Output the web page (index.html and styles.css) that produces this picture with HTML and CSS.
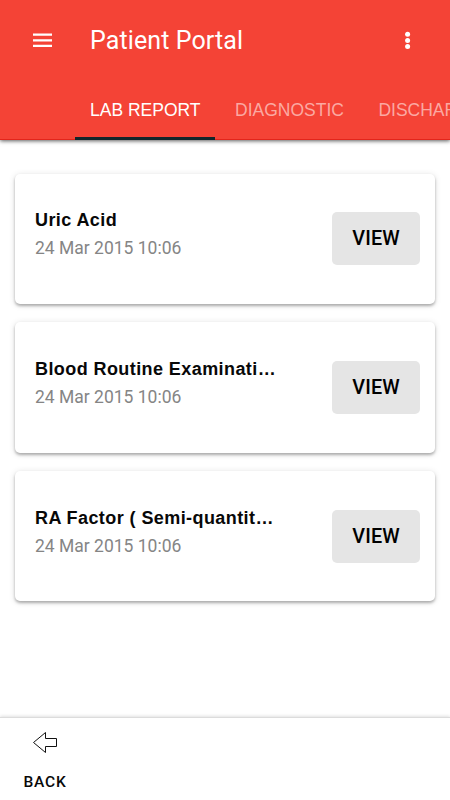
FILE: index.html
```html
<!DOCTYPE html>
<html lang="en">
<head>
<meta charset="utf-8">
<title>Patient Portal</title>
<link rel="stylesheet" href="styles.css">
</head>
<body>
<header class="header">
  <div class="toolbar">
    <svg class="menu" viewBox="0 0 19 14"><path d="M0 1.6h19M0 7.4h19M0 12.8h19" stroke="#fff" stroke-width="2.2"/></svg>
    <h1 class="title">Patient Portal</h1>
    <svg class="more" viewBox="0 0 6 18" fill="#fff"><circle cx="2.6" cy="3.3" r="2.5"/><circle cx="2.6" cy="9.5" r="2.5"/><circle cx="2.6" cy="15.5" r="2.5"/></svg>
  </div>
  <nav class="tabs">
    <a class="tab active">LAB REPORT</a>
    <a class="tab">DIAGNOSTIC</a>
    <a class="tab">DISCHARGE</a>
  </nav>
</header>
<main class="list">
  <article class="card">
    <div class="info"><h2 class="name">Uric Acid</h2><p class="date">24 Mar 2015 10:06</p></div>
    <button class="view">VIEW</button>
  </article>
  <article class="card">
    <div class="info"><h2 class="name">Blood Routine Examination</h2><p class="date">24 Mar 2015 10:06</p></div>
    <button class="view">VIEW</button>
  </article>
  <article class="card">
    <div class="info"><h2 class="name">RA Factor ( Semi-quantitative )</h2><p class="date">24 Mar 2015 10:06</p></div>
    <button class="view">VIEW</button>
  </article>
</main>
<footer class="footer">
  <div class="back">
    <svg class="arrow" viewBox="0 0 26 22"><path d="M1.5 10.5 13.5.5V6.5H24.5V14.5H13.5V20.5Z" fill="none" stroke="#111" stroke-width="1"/></svg>
    <span class="back-label">BACK</span>
  </div>
</footer>
</body>
</html>
```

FILE: styles.css
```css
* { box-sizing: border-box; }
body {
  margin: 0;
  height: 800px;
  display: flex;
  flex-direction: column;
  overflow: hidden;
  background: #fff;
  font-family: Roboto, sans-serif;
}
h1, h2, p { margin: 0; }
.header {
  height: 140px;
  flex: none;
  background: #f44336;
  border-bottom: 1px solid #e2251b;
  box-shadow: 0 1px 4px rgba(0, 0, 0, .65);
}
.toolbar {
  height: 80px;
  display: flex;
  align-items: center;
  padding: 0 39px 0 33px;
  color: #fff;
}
.menu { width: 19px; height: 14px; }
.title {
  flex: 1;
  margin-left: 38px;
  font-size: 25px;
  font-weight: 400;
  letter-spacing: .1px;
}
.more { width: 6px; height: 18px; }
.tabs {
  display: flex;
  gap: 5px;
  padding-left: 75px;
  overflow: hidden;
}
.tab {
  flex: none;
  height: 60px;
  padding: 0 14.5px 0 15px;
  line-height: 60px;
  font-family: "Liberation Sans", sans-serif;
  font-size: 17.5px;
  white-space: nowrap;
  color: #fba9a2;
}
.active {
  width: 140px;
  color: #fff;
  border-bottom: 3px solid #12262b;
}
.list {
  flex: 1;
  padding: 33.5px 15px 0;
  display: flex;
  flex-direction: column;
  gap: 18.5px;
}
.card {
  height: 130.25px;
  flex: none;
  display: flex;
  justify-content: space-between;
  align-items: center;
  padding: 0 15px 0 20px;
  border-radius: 5px;
  background: #fff;
  box-shadow: 0 2px 3px rgba(0, 0, 0, .28), 0 1px 7px rgba(0, 0, 0, .12);
}
.info { width: 244px; }
.name {
  height: 28px;
  line-height: 28px;
  font-family: "Liberation Sans", sans-serif;
  font-size: 18px;
  letter-spacing: .42px;
  color: #080808;
  white-space: nowrap;
  overflow: hidden;
  text-overflow: ellipsis;
}
.date {
  height: 28px;
  line-height: 28px;
  margin-bottom: 9px;
  font-size: 17.5px;
  color: #858585;
}
.view {
  width: 88px;
  height: 53px;
  padding: 0;
  border: 0;
  border-radius: 5px;
  background: #e5e5e5;
  color: #000;
  font: 500 19.8px Roboto, sans-serif;
  letter-spacing: .1px;
}
.footer {
  height: 83.5px;
  flex: none;
  border-top: 1px solid #dcdcdc;
  box-shadow: 0 -1px 3px rgba(0, 0, 0, .12);
}
.back {
  width: 90px;
  display: flex;
  flex-direction: column;
  align-items: center;
  padding-top: 14.5px;
}
.arrow { width: 26px; height: 22px; }
.back-label {
  margin-top: 18px;
  line-height: 20px;
  font-size: 15.5px;
  font-weight: 500;
  letter-spacing: .75px;
  color: #080808;
}
```
